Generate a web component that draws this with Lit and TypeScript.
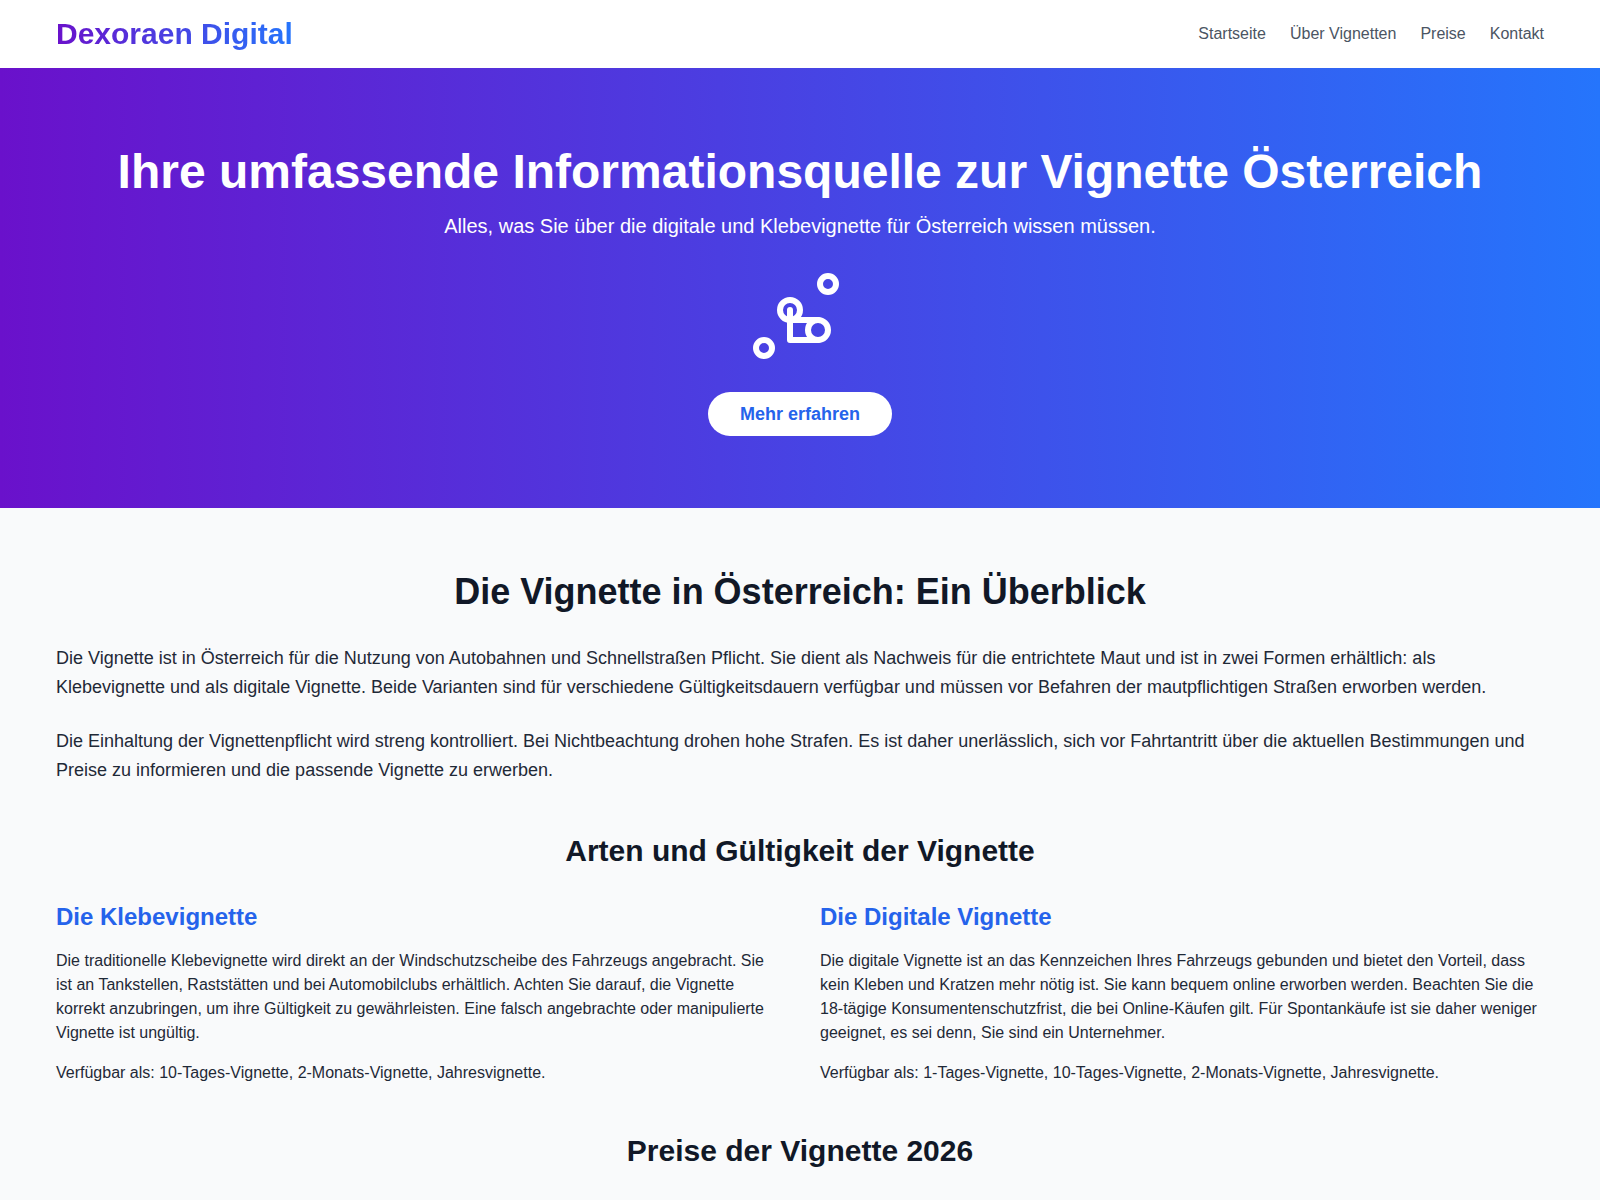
import { LitElement, html, css } from "lit";
import { customElement } from "lit/decorators.js";

interface VignetteType {
  title: string;
  text: string;
  options: string;
}

const NAV = [
  { label: "Startseite", href: "#start" },
  { label: "Über Vignetten", href: "#ueber" },
  { label: "Preise", href: "#preise" },
  { label: "Kontakt", href: "#kontakt" },
];

const TYPES: VignetteType[] = [
  {
    title: "Die Klebevignette",
    text: "Die traditionelle Klebevignette wird direkt an der Windschutzscheibe des Fahrzeugs angebracht. Sie ist an Tankstellen, Raststätten und bei Automobilclubs erhältlich. Achten Sie darauf, die Vignette korrekt anzubringen, um ihre Gültigkeit zu gewährleisten. Eine falsch angebrachte oder manipulierte Vignette ist ungültig.",
    options: "Verfügbar als: 10-Tages-Vignette, 2-Monats-Vignette, Jahresvignette.",
  },
  {
    title: "Die Digitale Vignette",
    text: "Die digitale Vignette ist an das Kennzeichen Ihres Fahrzeugs gebunden und bietet den Vorteil, dass kein Kleben und Kratzen mehr nötig ist. Sie kann bequem online erworben werden. Beachten Sie die 18-tägige Konsumentenschutzfrist, die bei Online-Käufen gilt. Für Spontankäufe ist sie daher weniger geeignet, es sei denn, Sie sind ein Unternehmer.",
    options: "Verfügbar als: 1-Tages-Vignette, 10-Tages-Vignette, 2-Monats-Vignette, Jahresvignette.",
  },
];

@customElement("app-root")
export class AppRoot extends LitElement {
  static styles = css`
    :host {
      display: block;
      min-height: 100vh;
      background: #f9fafb;
      color: #1f2937;
      font: 16px/24px "Liberation Sans", Arial, sans-serif;
    }
    h1, h2, h3, p { margin: 0; }
    a { text-decoration: none; }
    .container {
      box-sizing: border-box;
      max-width: 1536px;
      margin: 0 auto;
      padding: 0 24px;
    }
    .header { background: #fff; }
    .bar {
      display: flex;
      align-items: center;
      justify-content: space-between;
      padding-top: 16px;
      padding-bottom: 16px;
    }
    .brand {
      font-size: 30px;
      line-height: 36px;
      font-weight: 700;
      color: transparent;
      background: linear-gradient(to right, #6a11cb, #2575fc);
      -webkit-background-clip: text;
      background-clip: text;
    }
    .nav { display: flex; gap: 24px; }
    .nav a { color: #4b5563; }
    .hero {
      padding: 80px 0;
      text-align: center;
      color: #fff;
      background: linear-gradient(to right, #6a11cb, #2575fc);
    }
    .hero h1 { font-size: 48px; line-height: 48px; margin-bottom: 16px; }
    .lead { font-size: 20px; line-height: 28px; margin-bottom: 32px; }
    .art { display: block; width: 96px; height: 96px; margin: 0 auto 32px; }
    .action { font-size: 18px; line-height: 28px; }
    .cta {
      padding: 12px 32px;
      border-radius: 9999px;
      background: #fff;
      color: #2563eb;
      font-weight: 700;
    }
    .main { padding-top: 64px; }
    .title { color: #111827; text-align: center; font-weight: 700; }
    .title.large { font-size: 36px; line-height: 40px; margin-bottom: 32px; }
    .title.medium { font-size: 30px; line-height: 36px; margin: 48px 0 32px; }
    .text { font-size: 18px; line-height: 29px; margin-bottom: 25px; }
    .grid { display: grid; grid-template-columns: repeat(2, 1fr); gap: 40px; }
    .grid h3 { color: #2563eb; font-size: 24px; line-height: 32px; margin-bottom: 16px; }
    .grid p + p { margin-top: 16px; }
  `;

  render() {
    return html`
      <header class="header">
        <div class="container bar">
          <a class="brand" href="#start">Dexoraen Digital</a>
          <nav class="nav">
            ${NAV.map((n) => html`<a href=${n.href}>${n.label}</a>`)}
          </nav>
        </div>
      </header>
      <section class="hero" id="start">
        <div class="container">
          <h1>Ihre umfassende Informationsquelle zur Vignette Österreich</h1>
          <p class="lead">Alles, was Sie über die digitale und Klebevignette für Österreich wissen müssen.</p>
          <svg class="art" viewBox="0 0 96 96" fill="none" stroke="#fff" stroke-width="6" aria-hidden="true">
            <circle cx="76" cy="12" r="8" />
            <circle cx="38" cy="38" r="10" />
            <circle cx="12" cy="76" r="8" />
            <circle cx="66" cy="58" r="10" />
            <path d="M38 38V68H66M38 48H66" stroke-linecap="round" stroke-linejoin="round" />
          </svg>
          <div class="action"><a class="cta" href="#ueber">Mehr erfahren</a></div>
        </div>
      </section>
      <main class="container main">
        <section id="ueber">
          <h2 class="title large">Die Vignette in Österreich: Ein Überblick</h2>
          <p class="text">Die Vignette ist in Österreich für die Nutzung von Autobahnen und Schnellstraßen Pflicht. Sie dient als Nachweis für die entrichtete Maut und ist in zwei Formen erhältlich: als Klebevignette und als digitale Vignette. Beide Varianten sind für verschiedene Gültigkeitsdauern verfügbar und müssen vor Befahren der mautpflichtigen Straßen erworben werden.</p>
          <p class="text">Die Einhaltung der Vignettenpflicht wird streng kontrolliert. Bei Nichtbeachtung drohen hohe Strafen. Es ist daher unerlässlich, sich vor Fahrtantritt über die aktuellen Bestimmungen und Preise zu informieren und die passende Vignette zu erwerben.</p>
        </section>
        <section>
          <h2 class="title medium">Arten und Gültigkeit der Vignette</h2>
          <div class="grid">
            ${TYPES.map((t) => html`
              <article>
                <h3>${t.title}</h3>
                <p>${t.text}</p>
                <p>${t.options}</p>
              </article>`)}
          </div>
        </section>
        <section id="preise">
          <h2 class="title medium">Preise der Vignette 2026</h2>
        </section>
      </main>
    `;
  }
}
